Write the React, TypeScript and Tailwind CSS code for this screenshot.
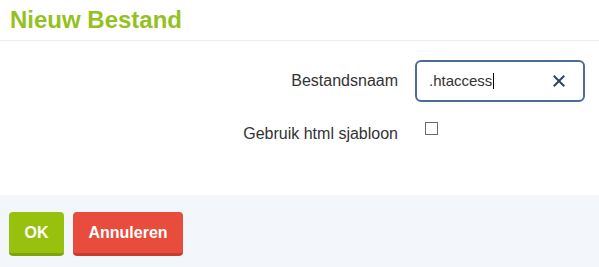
import React from "react";

export default function App() {
  return (
    <div className="w-[599px] h-[267px] flex flex-col bg-white font-['Liberation_Sans',Arial,sans-serif]">
      <header className="h-[41px] border-b border-[#ececec] pl-[10px] flex items-start">
        <h1 className="text-[24px] leading-[28px] pt-[6px] font-bold text-[#95c11f]">Nieuw Bestand</h1>
      </header>
      <main className="flex-1 pt-[19px]">
        <div className="grid grid-cols-[398px_170px] gap-x-[17px] gap-y-[20px]">
          <label className="text-[16px] text-[#333] text-right self-center">Bestandsnaam</label>
          <div className="h-[42px] rounded-[6px] border-2 border-[#4d6b9b] flex items-center pl-[12px] pr-[18px]">
            <div className="flex-1 flex items-center text-[15px] text-[#333]">
              <span>.htaccess</span>
              <span className="w-px h-[16px] bg-black ml-px" />
            </div>
            <svg width="12" height="12" viewBox="0 0 12 12" className="text-[#2c4560]">
              <path d="M1.5 1.5 L10.5 10.5 M10.5 1.5 L1.5 10.5" stroke="currentColor" strokeWidth="2" strokeLinecap="square" fill="none" />
            </svg>
          </div>
          <label className="text-[16px] leading-[20px] mt-[2px] text-[#333] text-right">Gebruik html sjabloon</label>
          <div>
            <span className="block ml-[10px] w-[13px] h-[13px] border border-[#6b6b6b] bg-white" />
          </div>
        </div>
      </main>
      <footer className="h-[72px] bg-[#f3f6fa] pt-[17px] px-[9px] flex items-start gap-[9px]">
        <button className="h-[44px] w-[55px] rounded-[4px] bg-[#97c10d] border-b-[3px] border-[#7fa30a] text-white font-bold text-[16px]">OK</button>
        <button className="h-[44px] w-[110px] rounded-[4px] bg-[#e74c3c] border-b-[3px] border-[#c63d30] text-white font-bold text-[16px]">Annuleren</button>
      </footer>
    </div>
  );
}
